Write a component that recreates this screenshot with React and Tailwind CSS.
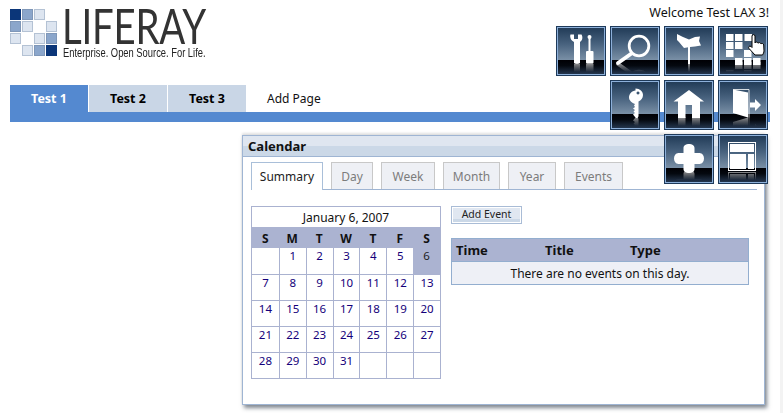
import React from "react";

const F = { fontFamily: '"Noto Sans","DejaVu Sans",sans-serif' };

function Icon({ children, overlay }) {
  const id = React.useId().replace(/[^a-zA-Z0-9]/g, "");
  return (
    <div className="w-[50px] h-[50px] border border-[#1e3a5a] bg-[#8db0da] p-px">
      <svg width="46" height="46" viewBox="2 2 46 46" className="block bg-black">
        <defs>
          <linearGradient id={id + "s"} x1="0" y1="0" x2="0" y2="1">
            <stop offset="0" stopColor="#223c58" />
            <stop offset="0.5" stopColor="#48627e" />
            <stop offset="1" stopColor="#7a90a6" />
          </linearGradient>
          <linearGradient id={id + "g"} x1="0" y1="0" x2="0" y2="1">
            <stop offset="0" stopColor="#000004" />
            <stop offset="0.4" stopColor="#04080f" />
            <stop offset="1" stopColor="#24364e" />
          </linearGradient>
          <linearGradient id={id + "f"} gradientUnits="userSpaceOnUse" x1="0" y1="34" x2="0" y2="46">
            <stop offset="0" stopColor="#fff" stopOpacity="0.8" />
            <stop offset="1" stopColor="#fff" stopOpacity="0" />
          </linearGradient>
          <mask id={id + "m"} maskUnits="userSpaceOnUse" x="0" y="34" width="50" height="16">
            <rect x="0" y="34" width="50" height="16" fill={`url(#${id}f)`} />
          </mask>
        </defs>
        <rect x="2" y="2" width="46" height="32" fill={`url(#${id}s)`} />
        <rect x="2" y="34" width="46" height="14" fill={`url(#${id}g)`} />
        <g mask={`url(#${id}m)`} fill="#fff" stroke="none">
          <g transform="translate(0 75) scale(1 -1)">{children}</g>
        </g>
        {children}
        {overlay}
      </svg>
    </div>
  );
}

const Tools = () => (
  <g fill="#fff">
    <path d="M14.500 8.500h3.500v4.500h4v-4.500h3.500c1.500 2.500 1 6-1.500 7.500v21c-.8 1-5.200 1-6 0V16c-3-1.500-4.500-5-3.500-7.500z" />
    <rect x="32.500" y="11" width="2" height="15" />
    <circle cx="33.500" cy="11" r="2" />
    <rect x="30" y="25" width="7.500" height="12.500" rx="1" />
  </g>
);
const Search = () => (
  <g>
    <circle cx="29" cy="20" r="9.800" fill="none" stroke="#fff" strokeWidth="2.800" />
    <path d="M21.500 27.500 8 37" stroke="#fff" strokeWidth="3.800" strokeLinecap="round" />
  </g>
);
const Vane = () => (
  <g fill="#fff">
    <path d="M13 8l6 3 6 2.500 6-2.500 5-.5-1 4.500 2 4.500-6 1-5 .5-6 1-5-6-2-2z" />
    <rect x="24" y="19" width="2" height="19" />
  </g>
);
const Squares = () => (
  <g fill="#fff">
    {[[8,8],[17,8],[26.500,8],[8,16],[17,16],[8,24],[26,24],[17,32],[26,32],[35,32]].map(([x, y]) => (
      <rect key={`${x}-${y}`} x={x} y={y} width="7.500" height="7" />
    ))}
  </g>
);
const Hand = () => (
  <path
    d="M34 10c0-1.800 3-1.800 3 0v7c.5-1.300 2.700-1.300 3 .3.500-1.100 2.700-1 3 .6.700-.8 2.500-.5 2.700 1l.3 6c0 1.500-.8 3-1.500 4.100H37l-6-6.500c-1.200-1.600.6-3.200 2-2l1 1z"
    fill="#fff"
    stroke="#000"
    strokeWidth="1"
  />
);
const Key = () => (
  <g fill="#fff">
    <path fillRule="evenodd" d="M25.500 8.500c4.500 0 7.500 3 7.500 6.500 0 3-2 5.500-4.500 6.500V36c-.5 2.500-2.500 2.500-3 1.500L23 34.500l2-1.500-1.500-1.500 1.500-1.500-2-1.500 2-1.500-1-1.500 1-1.500c-3-1-6-3.500-6-6.500 0-3.500 3-7 6.500-7.100zM28 11.500a1.500 1.500 0 1 0 .01 0z" />
  </g>
);
const Home = () => (
  <path fill="#fff" fillRule="evenodd" d="M25 10 40 21.500h-4V38h-8V25h-6.500v13H14V21.500h-4.500z" />
);
const Door = () => (
  <g>
    <path d="M15 9.500h16v28" fill="none" stroke="#fff" strokeWidth="0.800" />
    <path d="M15 9.500 30 12.500v25l-15-4.500z" fill="#fff" />
    <path d="M32 22.500h5v-3.500l6 6-6 6v-3.500h-5z" fill="#fff" />
  </g>
);
const Plus = () => (
  <path fill="#fff" d="M19.500 14c0-5.300 11-5.300 11 0v5h5c6 0 6 11 0 11h-5v5c0 5.300-11 5.300-11 0v-5h-5c-6 0-6-11 0-11h5z" />
);
const Layout = () => (
  <g fill="#fff">
    <rect x="10.500" y="8.500" width="27" height="28" fill="none" stroke="#fff" />
    <rect x="12" y="10" width="24" height="8" />
    <rect x="12" y="20" width="16" height="15" />
    <rect x="30" y="20" width="6" height="15" />
  </g>
);

const weeks = [
  ["", 1, 2, 3, 4, 5, 6],
  [7, 8, 9, 10, 11, 12, 13],
  [14, 15, 16, 17, 18, 19, 20],
  [21, 22, 23, 24, 25, 26, 27],
  [28, 29, 30, 31, "", "", ""],
];

function Tab({ children, active, w }) {
  return active ? (
    <div className={`${w} h-[28px] -mb-px border border-b-0 border-[#a9bfd9] bg-white text-[#222] flex items-center justify-center pt-px`}>{children}</div>
  ) : (
    <div className={`${w} h-[27px] border border-[#c8c8c8] border-b-0 bg-[#eef0f5] text-[#7c7c7c] flex items-center justify-center pt-px`}>{children}</div>
  );
}

export default function App() {
  return (
    <div className="relative w-[783px] h-[413px] bg-white overflow-hidden text-[12px] text-black" style={F}>
      <div className="absolute right-0 top-0 bottom-0 w-[3px] bg-[#f3f3f3]" />
      {/* header */}
      <div className="h-[85px] pl-[10px] pt-[9px] flex items-start">
        <div className="grid grid-cols-[repeat(4,11px)] grid-rows-[repeat(4,11px)] gap-px">
          {["d","m","l","","m","l","","l","l","","l","m","","l","m","d"].map((c, i) => (
            <div
              key={i}
              className={
                c === "d" ? "bg-[#0b3679] border border-[#0b3679]" :
                c === "m" ? "bg-[#8ba6cb] border border-[#7f97b8]" :
                c === "l" ? "bg-[#dde5f0] border border-[#b4c2d4]" : ""
              }
            />
          ))}
        </div>
        <div className="ml-[5px] -mt-[2px] text-[#333]">
          <div className="text-[48px] leading-[38px] whitespace-nowrap font-normal tracking-[-0.3px] origin-left scale-x-[0.8]" style={{ fontFamily: 'Lato,sans-serif' }}>LIFERAY</div>
          <div className="text-[12px] leading-[14px] ml-px mt-px whitespace-nowrap text-[#222] origin-left scale-x-[0.78]" style={{ fontFamily: '"Liberation Sans",sans-serif' }}>Enterprise. Open Source. For Life.</div>
        </div>
        <div className="ml-auto mr-[14px] -mt-[5px] leading-[18px] text-[12.500px] text-[#111]">Welcome Test LAX 3!</div>
      </div>

      {/* nav */}
      <div className="flex h-[27px] pl-[10px] text-[12.500px] font-bold">
        <div className="w-[78px] pt-px bg-[#5489d0] text-white flex items-center justify-center">Test 1</div>
        <div className="w-[78px] pt-px ml-px bg-[#c9d6e6] flex items-center justify-center">Test 2</div>
        <div className="w-[78px] pt-px ml-px bg-[#c9d6e6] flex items-center justify-center">Test 3</div>
        <div className="ml-[21px] font-normal flex items-center text-[12px] text-[#111]">Add Page</div>
      </div>
      <div className="h-[10px] ml-[10px] w-[760px] bg-[#5489d0]" />

      {/* panel */}
      <div className="mt-[13px] ml-[242px] w-[523px] h-[270px] border border-[#9fb5d3] bg-white shadow-[2px_3px_4px_rgba(60,70,85,0.65),0_-2px_2px_rgba(120,120,120,0.2)]">
        <div className="h-[21px] flex items-center pl-[5px] pt-[2px] font-bold text-[13px] text-[#111] bg-[linear-gradient(#dfe6f0_0%,#dfe6f0_50%,#cbd8e7_50%,#cbd8e7_100%)] border-b border-[#9fb5d3]">Calendar</div>
        <div className="px-[8px] pt-[6px]">
          <div className="flex gap-[8px] items-end h-[27px] border-b border-[#9fb5d3] w-[506px]">
            <Tab active w="w-[72px]">Summary</Tab>
            <Tab w="w-[42px]">Day</Tab>
            <Tab w="w-[54px]">Week</Tab>
            <Tab w="w-[57px]">Month</Tab>
            <Tab w="w-[48px]">Year</Tab>
            <Tab w="w-[59px]">Events</Tab>
          </div>
          <div className="flex mt-[16px]">
            <div className="w-[190px] border border-[#aab2d0] text-center">
              <div className="h-[20px] pt-[2px] flex items-center justify-center text-[12px] text-[#111]">January 6, 2007</div>
              <div className="grid grid-cols-7 h-[21px] pt-[2px] bg-[#abb3d1] font-bold items-center text-[12px] text-[#111]">
                {["S","M","T","W","T","F","S"].map((d, i) => <div key={i}>{d}</div>)}
              </div>
              {weeks.map((w, r) => (
                <div key={r} className={`grid grid-cols-7 h-[26px] ${r > 0 ? "border-t border-[#aab2d0]" : ""}`}>
                  {w.map((d, i) => (
                    <div
                      key={i}
                      className={`text-[11.500px] leading-[16px] ${d === 6 ? "bg-[#abb3d1] text-[#222]" : "text-[#14007a]"} ${i > 0 && d !== 6 ? "border-l border-[#aab2d0]" : ""}`}
                    >
                      {d}
                    </div>
                  ))}
                </div>
              ))}
            </div>
            <div className="ml-[10px] w-[298px]">
              <div className="w-[71px] h-[18px] border border-[#a9bcd6] p-px">
                <div className="h-full flex items-center justify-center text-[10.500px] text-[#222] bg-[linear-gradient(#e0e7f1_0%,#e0e7f1_80%,#cbd8e7_80%)]">Add Event</div>
              </div>
              <div className="mt-[14px] border border-[#93aecf]">
                <div className="h-[23px] pt-[2px] bg-[#abb3d1] border-b border-[#93aecf] flex items-center font-bold text-[13px] text-[#111]">
                  <span className="w-[93px] pl-[4px]">Time</span>
                  <span className="w-[85px]">Title</span>
                  <span>Type</span>
                </div>
                <div className="h-[22px] pt-[2px] bg-[#eef0f6] flex items-center justify-center text-[12px] text-[#111]">There are no events on this day.</div>
              </div>
            </div>
          </div>
        </div>
      </div>

      {/* floating dock */}
      <div className="absolute left-[556px] top-[26px] grid grid-cols-[repeat(4,50px)] grid-rows-[repeat(3,50px)] gap-[4px]">
        <Icon><Tools /></Icon>
        <Icon><Search /></Icon>
        <Icon><Vane /></Icon>
        <Icon overlay={<Hand />}><Squares /></Icon>
        <div />
        <Icon><Key /></Icon>
        <Icon><Home /></Icon>
        <Icon><Door /></Icon>
        <div />
        <div />
        <Icon><Plus /></Icon>
        <Icon><Layout /></Icon>
      </div>
    </div>
  );
}
